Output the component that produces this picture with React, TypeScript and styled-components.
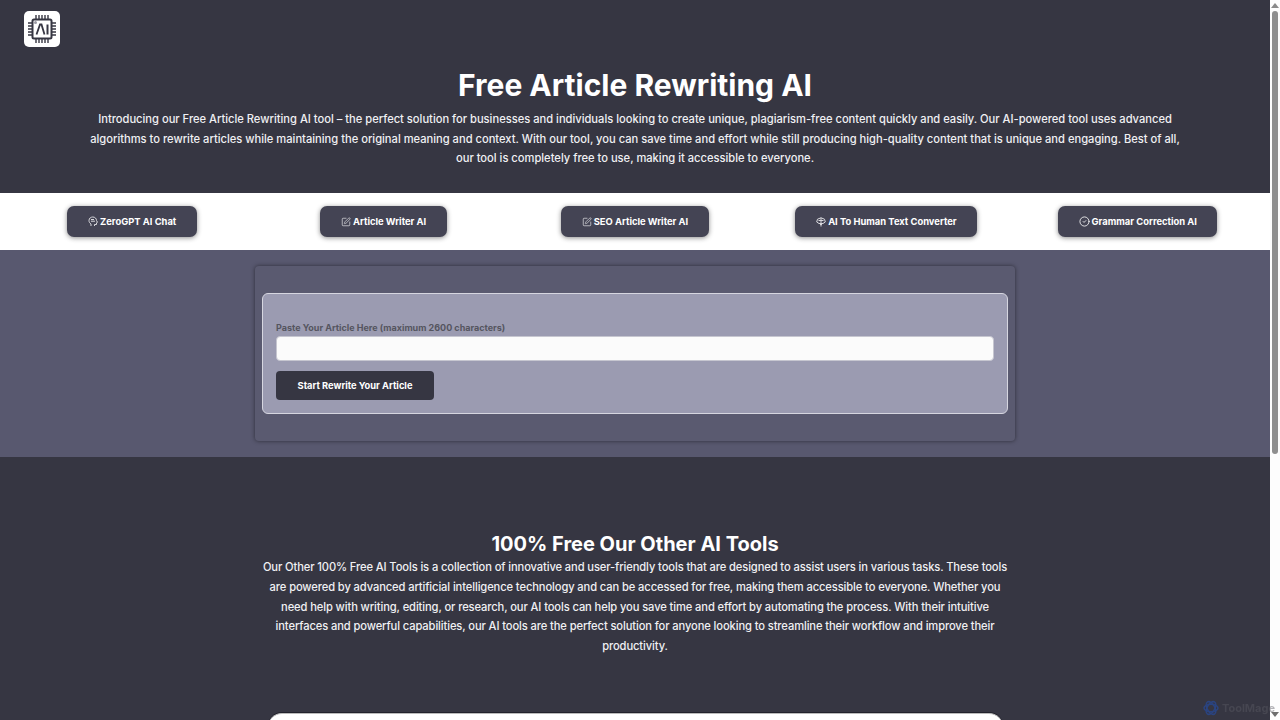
import React from "react";
import styled, { createGlobalStyle } from "styled-components";
import { SquarePen, CircleCheck } from "lucide-react";

const GlobalStyle = createGlobalStyle`
  html, body { height: 100%; }
  body {
    margin: 0;
    background: #363642;
    font-family: "Inter", "Liberation Sans", sans-serif;
    overflow: hidden;
  }
  * { box-sizing: border-box; }
`;

const Shell = styled.div`
  display: flex;
  height: 100vh;
  overflow: hidden;
`;
const Page = styled.main`
  flex: 1;
  min-width: 0;
`;
const ScrollTrack = styled.div`
  width: 10px;
  background: #fdfdfd;
  display: flex;
  flex-direction: column;
  align-items: center;
  padding: 3px 0;
`;
const ScrollArrow = styled.div<{ $down?: boolean }>`
  width: 0;
  height: 0;
  border-left: 4px solid transparent;
  border-right: 4px solid transparent;
  ${(p) => (p.$down ? "border-top: 5px solid #6e6e6e;" : "border-bottom: 5px solid #8a8a8a;")}
`;
const ScrollThumb = styled.div`
  width: 6px;
  height: 443px;
  margin-top: 3px;
  margin-bottom: auto;
  background: #8f8f8f;
  border-radius: 3px;
`;
const Hero = styled.header`
  background: #363642;
  height: 193px;
  padding: 11px 24px 0;
  color: #fff;
`;
const LogoBox = styled.div`
  width: 36px;
  height: 36px;
  background: #fff;
  border-radius: 5px;
  display: flex;
  align-items: center;
  justify-content: center;
`;
const Title = styled.h1`
  margin: 14px 0 0;
  font-size: 30px;
  line-height: 48px;
  font-weight: 700;
  text-align: center;
`;
const Intro = styled.p`
  margin: 1px auto 0;
  width: 1104px;
  font-size: 11.15px;
  font-weight: 500;
  line-height: 19.6px;
  text-align: center;
  color: #f0f0f3;
`;
const ToolNav = styled.nav`
  background: #fff;
  height: 57px;
  padding: 0 6.5px;
  display: grid;
  grid-template-columns: repeat(5, 1fr);
  align-items: center;
  justify-items: center;
`;
const ToolButton = styled.button<{ $w: number }>`
  width: ${(p) => p.$w}px;
  height: 31px;
  border: none;
  border-radius: 7px;
  background: #444454;
  color: #fff;
  font-family: "Inter", sans-serif;
  font-size: 9.4px;
  font-weight: 700;
  display: flex;
  align-items: center;
  justify-content: center;
  gap: 2px;
  padding: 0;
  box-shadow: 0 1px 5px rgba(0, 0, 0, 0.45);
`;
const FormSection = styled.section`
  background: #58586f;
  height: 207px;
  padding-top: 16px;
`;
const FormCard = styled.div`
  width: 760px;
  height: 175px;
  margin: 0 auto;
  padding: 27px 7px 0;
  background: #5a5a70;
  border-radius: 4px;
  box-shadow: 0 0 4px rgba(0, 0, 0, 0.5);
`;
const FormInner = styled.form`
  height: 121px;
  padding: 27px 13px 0;
  background: #9b9bb1;
  border: 1px solid #d6d6e0;
  border-radius: 6px;
`;
const FieldLabel = styled.label`
  display: block;
  font-size: 9px;
  line-height: 13px;
  font-weight: 700;
  color: #55555f;
`;
const FieldInput = styled.input`
  display: block;
  width: 100%;
  height: 25px;
  margin-top: 2px;
  background: #fbfbfb;
  border: 1px solid #c6c6d0;
  border-radius: 4px;
`;
const SubmitButton = styled.button`
  display: block;
  width: 158px;
  height: 29px;
  margin-top: 10px;
  padding: 0;
  border: none;
  border-radius: 4px;
  background: #363642;
  color: #fff;
  font-family: "Inter", sans-serif;
  font-size: 9.3px;
  font-weight: 700;
`;
const OtherSection = styled.section`
  background: #363642;
  padding: 73px 0 200px;
  color: #fff;
`;
const OtherInner = styled.div`
  width: 750px;
  margin: 0 auto;
  text-align: center;
`;
const OtherTitle = styled.h2`
  margin: 0;
  font-size: 20px;
  line-height: 28px;
  font-weight: 700;
`;
const OtherText = styled.p`
  margin: 0;
  font-size: 11.15px;
  font-weight: 500;
  letter-spacing: -0.1px;
  line-height: 19.8px;
  color: #f0f0f3;
`;
const ToolsPanel = styled.div`
  width: 735px;
  height: 300px;
  margin: 56px auto 0;
  background: #fff;
  border-radius: 14px;
  border-top: 1px solid #bbb;
  box-shadow: 0 -1px 0 #22222c;
`;
const Watermark = styled.div`
  position: fixed;
  right: 5px;
  bottom: 4px;
  display: flex;
  align-items: center;
  gap: 3px;
  font-size: 11px;
  font-weight: 700;
  color: rgba(90, 90, 100, 0.45);
`;

const ChipLogo = () => (
  <svg width="28" height="28" viewBox="0 0 28 28" fill="none" stroke="#363642">
    <rect x="4.500" y="4.500" width="19" height="19" rx="1.500" strokeWidth="2" />
    <path d="M8 0v4M11 0v4M14 0v4M17 0v4M20 0v4M8 24v4M11 24v4M14 24v4M17 24v4M20 24v4M0 8h4M0 11h4M0 14h4M0 17h4M0 20h4M24 8h4M24 11h4M24 14h4M24 17h4M24 20h4" strokeWidth="1.400" />
    <circle cx="7.500" cy="7.500" r="1.500" fill="#9a9aa4" stroke="none" />
    <path d="M8.500 19.500 12 9.500h1.500l3 10" strokeWidth="1.800" />
    <path d="M19.500 9.500v10" strokeWidth="2" />
  </svg>
);

const HeadIcon = () => (
  <svg width="10" height="11" viewBox="0 0 10 11" fill="none" stroke="#d8d8dc" strokeWidth="1">
    <path d="M3 10V8C1.500 7 1 5.800 1 4.500 1 2.300 2.800 1 4.800 1 7 1 8.500 2.600 8.500 4.500L9.500 6.300 8.500 6.800V8.500H6.500V10" />
    <path d="M3 3.500h3M3 5.200h4" />
  </svg>
);

const BrainIcon = () => (
  <svg width="10" height="10" viewBox="0 0 10 10" fill="none" stroke="#d8d8dc" strokeWidth="1">
    <path d="M5 .8 8.500 2.200 9.300 5 7 6.500H3L.7 5 1.500 2.200Z" />
    <path d="M2.500 3.500h5M5 .8V6.500" />
    <path d="M4 7.500h2M5 7v2.500" />
  </svg>
);

const KnotIcon = () => (
  <svg width="16" height="16" viewBox="0 0 16 16" fill="none" stroke="#2b4480" strokeWidth="1.500">
    <ellipse cx="8" cy="8" rx="7" ry="3.800" />
    <ellipse cx="8" cy="8" rx="7" ry="3.800" transform="rotate(60 8 8)" />
    <ellipse cx="8" cy="8" rx="7" ry="3.800" transform="rotate(120 8 8)" />
  </svg>
);

const PenIcon = () => <SquarePen size={10} strokeWidth={1.8} color="#d8d8dc" />;

const tools = [
  { label: "ZeroGPT AI Chat", width: 130, icon: <HeadIcon /> },
  { label: "Article Writer AI", width: 127, icon: <PenIcon /> },
  { label: "SEO Article Writer AI", width: 148, icon: <PenIcon /> },
  { label: "AI To Human Text Converter", width: 182, icon: <BrainIcon /> },
  { label: "Grammar Correction AI", width: 159, icon: <CircleCheck size={11} strokeWidth={1.8} color="#fff" /> },
];

export default function App() {
  return (
    <Shell>
      <GlobalStyle />
      <Page>
        <Hero>
          <LogoBox>
            <ChipLogo />
          </LogoBox>
          <Title>Free Article Rewriting AI</Title>
          <Intro>
            Introducing our Free Article Rewriting AI tool – the perfect solution for businesses and individuals looking to create unique, plagiarism-free content quickly and easily. Our AI-powered tool uses advanced algorithms to rewrite articles while maintaining the original meaning and context. With our tool, you can save time and effort while still producing high-quality content that is unique and engaging. Best of all, our tool is completely free to use, making it accessible to everyone.
          </Intro>
        </Hero>
        <ToolNav>
          {tools.map((t) => (
            <ToolButton key={t.label} $w={t.width}>
              {t.icon}
              {t.label}
            </ToolButton>
          ))}
        </ToolNav>
        <FormSection>
          <FormCard>
            <FormInner>
              <FieldLabel htmlFor="article">Paste Your Article Here (maximum 2600 characters)</FieldLabel>
              <FieldInput id="article" />
              <SubmitButton type="button">Start Rewrite Your Article</SubmitButton>
            </FormInner>
          </FormCard>
        </FormSection>
        <OtherSection>
          <OtherInner>
            <OtherTitle>100% Free Our Other AI Tools</OtherTitle>
            <OtherText>
              Our Other 100% Free AI Tools is a collection of innovative and user-friendly tools that are designed to assist users in various tasks. These tools are powered by advanced artificial intelligence technology and can be accessed for free, making them accessible to everyone. Whether you need help with writing, editing, or research, our AI tools can help you save time and effort by automating the process. With their intuitive interfaces and powerful capabilities, our AI tools are the perfect solution for anyone looking to streamline their workflow and improve their productivity.
            </OtherText>
          </OtherInner>
          <ToolsPanel />
        </OtherSection>
      </Page>
      <ScrollTrack>
        <ScrollArrow />
        <ScrollThumb />
        <ScrollArrow $down />
      </ScrollTrack>
      <Watermark>
        <KnotIcon />
        ToolMage
      </Watermark>
    </Shell>
  );
}
